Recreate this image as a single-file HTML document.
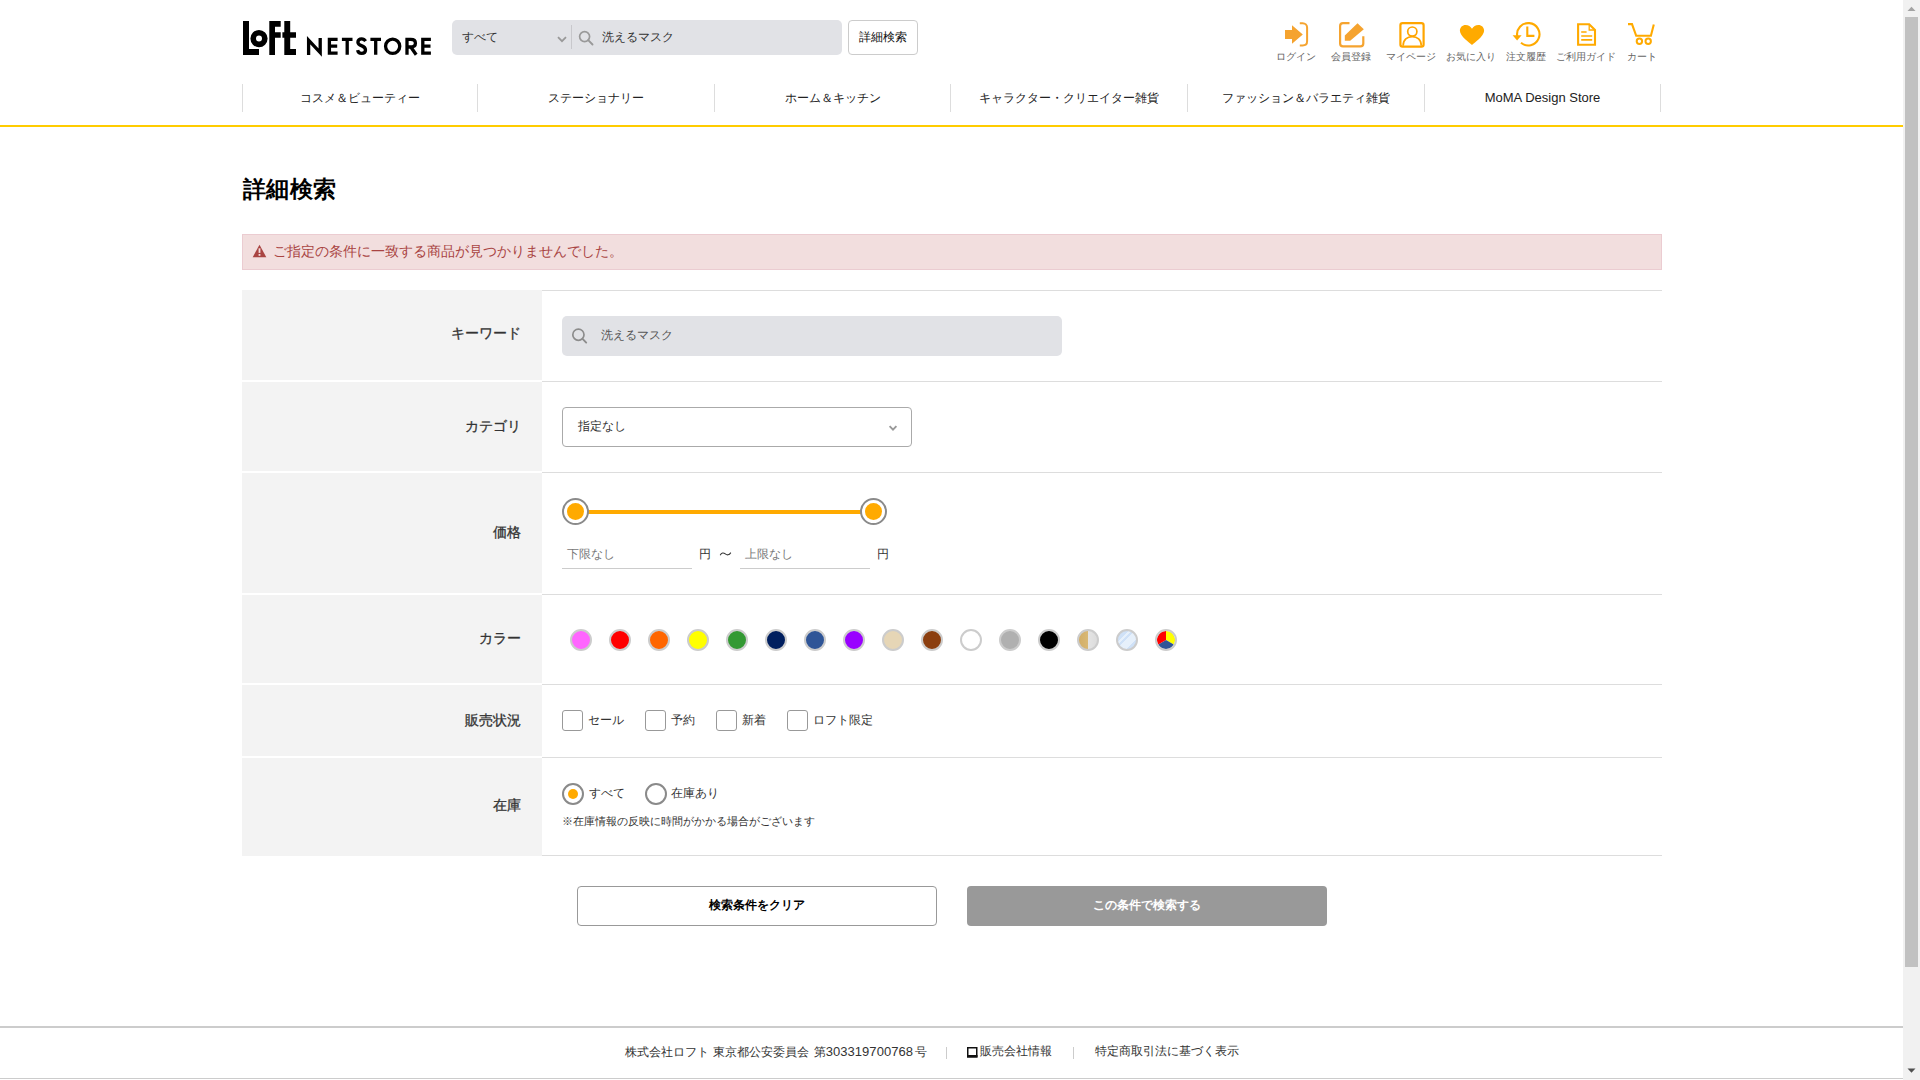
<!DOCTYPE html>
<html lang="ja"><head><meta charset="utf-8"><title>詳細検索 | ロフト公式通販サイト</title>
<style>
*{box-sizing:border-box;margin:0;padding:0}
html,body{width:1920px;height:1080px;overflow:hidden;background:#fff}
body{font-family:"Liberation Sans",sans-serif;color:#333;position:relative}
.a{position:absolute}
.t{position:absolute;white-space:nowrap;line-height:1}
svg{display:block}
.lbl{left:242px;width:279px;text-align:right;font-size:14px;font-weight:normal;-webkit-text-stroke:0.3px #333;color:#333}
.cb{position:absolute;top:710px;width:21px;height:21px;border:1px solid #999;border-radius:3px;background:#fff}
.cbl{top:714px;font-size:12px;color:#333}
.sw{position:absolute;top:629px;width:22px;height:22px;border-radius:50%;border:2px solid #ccc;overflow:hidden}

</style></head><body>

<!-- ===== HEADER ===== -->
<div class="a" id="logo" style="left:242px;top:20px;width:192px;height:37px">
<svg width="192" height="37" viewBox="242 20 192 37">
 <g fill="#000">
  <!-- L -->
  <path d="M243 21H249V49H259V55H243Z"/>
  <!-- o -->
  <path fill-rule="evenodd" d="M259 30a8.6 8.6 0 1 1 0 17.2a8.6 8.6 0 1 1 0-17.2zM259 35.6a3 3 0 1 0 0 6a3 3 0 1 0 0-6z"/>
  <!-- F -->
  <path d="M269.3 21H280.7V26.7H275V32.2H280.7V37.8H275V55H269.3Z"/>
  <!-- t -->
  <path d="M284.3 21H290.2V32.2H296V37.8H290.2V49H296V55H284.3V37.8H282.4V32.2H284.3Z"/>
 </g>
 <g fill="none" stroke="#000" stroke-width="3.3" stroke-linejoin="miter">
  <!-- N -->
  <path d="M308.6 55V40.2L320.2 52.6V38"/>
  <!-- E -->
  <path d="M337.6 39.4H329.4V53.2H337.6M329.4 46.2H337.2"/>
  <!-- T -->
  <path d="M341.9 39.4H352.5M347.2 39.4V54.8"/>
  <!-- S -->
  <path d="M365.6 41.2C364.6 39.6 363.2 38.9 361.6 38.9C359.4 38.9 357.9 40.3 357.9 42.2C357.9 44.2 359.6 45 361.9 45.9C364.5 46.9 365.5 48.2 365.5 50.1C365.5 52.3 363.7 53.4 361.6 53.4C359.5 53.4 358 52.1 357.6 50.2"/>
  <!-- T -->
  <path d="M370.4 39.4H381M375.7 39.4V54.8"/>
  <!-- O -->
  <circle cx="392.65" cy="46.3" r="7.1"/>
  <!-- R -->
  <path d="M407 54.8V39.4H410.8C413.9 39.4 415.4 40.9 415.4 43.2C415.4 45.6 413.8 47 410.8 47H407M410.8 47L416.2 54.8"/>
  <!-- E -->
  <path d="M430.9 39.4H422.8V53.2H430.9M422.8 46.2H430.5"/>
 </g>
</svg>
</div>

<!-- search bar -->
<div class="a" style="left:452px;top:20px;width:390px;height:35px;background:#e1e2e6;border-radius:5px"></div>
<div class="t" id="h_all" style="left:462px;top:31px;font-size:12px;color:#333">すべて</div>
<svg class="a" style="left:557px;top:36px" width="10" height="7" viewBox="0 0 10 7"><path d="M1 1.2L5 5.2L9 1.2" fill="none" stroke="#999" stroke-width="1.8"/></svg>
<div class="a" style="left:571px;top:25px;width:1px;height:24px;background:#c8c8cc"></div>
<svg class="a" style="left:578px;top:30px" width="16" height="16" viewBox="0 0 16 16"><circle cx="6.6" cy="6.6" r="5" fill="none" stroke="#999" stroke-width="1.7"/><path d="M10.2 10.2L14.5 14.5" stroke="#999" stroke-width="1.9" stroke-linecap="round"/></svg>
<div class="t" id="h_kw" style="left:602px;top:31px;font-size:12px;color:#333">洗えるマスク</div>
<div class="a" style="left:848px;top:20px;width:70px;height:35px;border:1px solid #ccc;border-radius:4px;background:#fff"></div>
<div class="t" id="h_adv" style="left:859px;top:31px;font-size:12px;color:#111">詳細検索</div>

<!-- header icons -->
<div id="icons">
 <!-- login -->
 <svg class="a" style="left:1283px;top:21px" width="28" height="28" viewBox="1283 21 28 28">
  <path d="M1285 30H1292V25.2L1302.8 34.5L1292 43.8V39H1285Z" fill="#f5a32f"/>
  <path d="M1299.8 23.2H1302.6C1305.2 23.2 1307.1 25 1307.1 27.6V41.2C1307.1 43.8 1305.2 45.4 1302.6 45.4H1299.8" fill="none" stroke="#f5a32f" stroke-width="2"/>
 </svg>
 <div class="t" style="left:1276px;top:52px;font-size:10px;color:#666">ログイン</div>
 <!-- register -->
 <svg class="a" style="left:1337px;top:20px" width="30" height="30" viewBox="1337 20 30 30">
  <path d="M1349.5 23.1H1343C1341.2 23.1 1340.1 24.2 1340.1 26V43.4C1340.1 45.2 1341.2 46.3 1343 46.3H1360.4C1362.2 46.3 1363.3 45.2 1363.3 43.4V36.3" fill="none" stroke="#f5a32f" stroke-width="2.2"/>
  <path d="M1357.5 23.3L1363.8 29.3L1350.2 40.8H1344.8V35.4Z" fill="#f5a32f"/>
 </svg>
 <div class="t" style="left:1331px;top:52px;font-size:10px;color:#666">会員登録</div>
 <!-- mypage -->
 <svg class="a" style="left:1397px;top:20px" width="30" height="30" viewBox="1397 20 30 30">
  <rect x="1400.4" y="23.1" width="23.2" height="23.6" rx="2.2" fill="none" stroke="#ffa500" stroke-width="2.2"/>
  <circle cx="1412.3" cy="31.6" r="4.6" fill="none" stroke="#ffa500" stroke-width="1.7"/>
  <path d="M1403.1 45.8C1403.1 39.8 1407.2 36.6 1412.2 36.6C1417.2 36.6 1421.3 39.8 1421.3 45.8" fill="none" stroke="#ffa500" stroke-width="1.7"/>
 </svg>
 <div class="t" style="left:1386px;top:52px;font-size:10px;color:#666">マイページ</div>
 <!-- fav -->
 <svg class="a" style="left:1457px;top:22px" width="30" height="26" viewBox="1457 22 30 26">
  <path d="M1472 45C1470 43 1459.9 36.3 1459.9 30.8C1459.9 27.3 1462.4 25 1465.6 25C1468.4 25 1470.7 26.6 1472 28.8C1473.3 26.6 1475.6 25 1478.4 25C1481.6 25 1484.1 27.3 1484.1 30.8C1484.1 36.3 1474 43 1472 45Z" fill="#ffaa00"/>
 </svg>
 <div class="t" style="left:1446px;top:52px;font-size:10px;color:#666">お気に入り</div>
 <!-- history -->
 <svg class="a" style="left:1510px;top:20px" width="34" height="30" viewBox="1510 20 34 30">
  <path d="M1517.3 36.5A11.2 11.2 0 1 1 1521 42.8" fill="none" stroke="#ffaa00" stroke-width="2.1"/>
  <path d="M1512.6 35.2H1521.6L1517.1 40.6Z" fill="#ffaa00"/>
  <path d="M1527.3 26.5V35.9H1534.4" fill="none" stroke="#ffaa00" stroke-width="2.1"/>
 </svg>
 <div class="t" style="left:1506px;top:52px;font-size:10px;color:#666">注文履歴</div>
 <!-- guide -->
 <svg class="a" style="left:1574px;top:21px" width="26" height="28" viewBox="1574 21 26 28">
  <path d="M1578.1 24.2H1589.2L1595 30V44.7H1578.1Z" fill="none" stroke="#ffaa00" stroke-width="2.1"/>
  <path d="M1589.2 24.2V30H1595" fill="none" stroke="#ffaa00" stroke-width="1.3"/>
  <path d="M1581.2 32H1586.6M1581.2 36H1592.2M1581.2 39.9H1592.2" stroke="#ffaa00" stroke-width="1.7"/>
 </svg>
 <div class="t" style="left:1556px;top:52px;font-size:10px;color:#666">ご利用ガイド</div>
 <!-- cart -->
 <svg class="a" style="left:1626px;top:21px" width="30" height="26" viewBox="1626 21 30 26">
  <path d="M1628 24.1H1632L1636.2 35.8H1650.9L1653.8 24.5" fill="none" stroke="#ffaa00" stroke-width="2.1"/>
  <circle cx="1639.4" cy="41.3" r="2.7" fill="none" stroke="#ffaa00" stroke-width="2"/>
  <circle cx="1648.2" cy="41.3" r="2.7" fill="none" stroke="#ffaa00" stroke-width="2"/>
 </svg>
 <div class="t" style="left:1627px;top:52px;font-size:10px;color:#666">カート</div>
</div>

<!-- nav -->
<div id="nav">
 <div class="a" style="left:242px;top:84px;width:1px;height:28px;background:#ddd"></div>
 <div class="a" style="left:477px;top:84px;width:1px;height:28px;background:#ddd"></div>
 <div class="a" style="left:714px;top:84px;width:1px;height:28px;background:#ddd"></div>
 <div class="a" style="left:950px;top:84px;width:1px;height:28px;background:#ddd"></div>
 <div class="a" style="left:1187px;top:84px;width:1px;height:28px;background:#ddd"></div>
 <div class="a" style="left:1424px;top:84px;width:1px;height:28px;background:#ddd"></div>
 <div class="a" style="left:1660px;top:84px;width:1px;height:28px;background:#ddd"></div>
 <div class="t" style="left:243px;width:234px;text-align:center;top:92px;font-size:12px;color:#222">コスメ＆ビューティー</div>
 <div class="t" style="left:478px;width:236px;text-align:center;top:92px;font-size:12px;color:#222">ステーショナリー</div>
 <div class="t" style="left:715px;width:235px;text-align:center;top:92px;font-size:12px;color:#222">ホーム＆キッチン</div>
 <div class="t" style="left:951px;width:236px;text-align:center;top:92px;font-size:12px;color:#222">キャラクター・クリエイター雑貨</div>
 <div class="t" style="left:1188px;width:236px;text-align:center;top:92px;font-size:12px;color:#222">ファッション＆バラエティ雑貨</div>
 <div class="t" style="left:1425px;width:235px;text-align:center;top:91px;font-size:13px;color:#222">MoMA Design Store</div>
</div>
<div class="a" style="left:0;top:125px;width:1903px;height:2px;background:#ffcc00"></div>

<!-- ===== MAIN ===== -->
<div class="t" id="title" style="left:242.5px;top:178px;font-size:23px;letter-spacing:0.6px;font-weight:bold;color:#000">詳細検索</div>

<div class="a" style="left:242px;top:234px;width:1420px;height:36px;background:#f2dede;border:1px solid #ebccd1"></div>
<svg class="a" style="left:252px;top:244px" width="15" height="14" viewBox="0 0 15 14"><path d="M7.5 0.8L14.3 13.2H0.7Z" fill="#a94442"/><rect x="6.6" y="4.3" width="1.8" height="4.6" fill="#f2dede"/><rect x="6.6" y="10" width="1.8" height="1.8" fill="#f2dede"/></svg>
<div class="t" id="alert" style="left:273px;top:244px;font-size:14px;color:#a94442">ご指定の条件に一致する商品が見つかりませんでした。</div>


<!-- table -->
<div id="tbl">
 <div class="a" style="left:242px;top:290px;width:300px;height:90px;background:#f3f3f3"></div>
 <div class="a" style="left:242px;top:382px;width:300px;height:89px;background:#f3f3f3"></div>
 <div class="a" style="left:242px;top:473px;width:300px;height:120px;background:#f3f3f3"></div>
 <div class="a" style="left:242px;top:595px;width:300px;height:88px;background:#f3f3f3"></div>
 <div class="a" style="left:242px;top:685px;width:300px;height:71px;background:#f3f3f3"></div>
 <div class="a" style="left:242px;top:758px;width:300px;height:98px;background:#f3f3f3"></div>
 <div class="a" style="left:542px;top:290px;width:1120px;height:1px;background:#ddd"></div>
 <div class="a" style="left:542px;top:381px;width:1120px;height:1px;background:#ddd"></div>
 <div class="a" style="left:542px;top:472px;width:1120px;height:1px;background:#ddd"></div>
 <div class="a" style="left:542px;top:594px;width:1120px;height:1px;background:#ddd"></div>
 <div class="a" style="left:542px;top:684px;width:1120px;height:1px;background:#ddd"></div>
 <div class="a" style="left:542px;top:757px;width:1120px;height:1px;background:#ddd"></div>
 <div class="a" style="left:542px;top:855px;width:1120px;height:1px;background:#ddd"></div>

 <div class="t lbl" style="top:326px">キーワード</div>
 <div class="t lbl" style="top:419px">カテゴリ</div>
 <div class="t lbl" style="top:525px">価格</div>
 <div class="t lbl" style="top:631px">カラー</div>
 <div class="t lbl" style="top:713px">販売状況</div>
 <div class="t lbl" style="top:798px">在庫</div>

 <!-- keyword -->
 <div class="a" style="left:562px;top:316px;width:500px;height:40px;background:#e1e2e6;border-radius:5px"></div>
 <svg class="a" style="left:570px;top:326px" width="20" height="20" viewBox="570 326 20 20"><circle cx="578.4" cy="334.7" r="5.6" fill="none" stroke="#8c8c8c" stroke-width="1.7"/><path d="M582.6 338.9L586.2 342.6" stroke="#8c8c8c" stroke-width="1.9" stroke-linecap="round"/></svg>
 <div class="t" id="kw" style="left:601px;top:329px;font-size:12px;color:#555">洗えるマスク</div>

 <!-- category -->
 <div class="a" style="left:562px;top:407px;width:350px;height:40px;border:1px solid #aaa;border-radius:4px;background:#fff"></div>
 <div class="t" id="cat" style="left:578px;top:420px;font-size:12px;color:#333">指定なし</div>
 <svg class="a" style="left:888px;top:424px" width="10" height="8" viewBox="888 424 10 8"><path d="M889.6 426.2L893 429.6L896.4 426.2" fill="none" stroke="#999" stroke-width="1.9"/></svg>

 <!-- price slider -->
 <div class="a" style="left:588px;top:510px;width:273px;height:4px;background:#ffaa00"></div>
 <div class="a" style="left:562px;top:498px;width:27px;height:27px;border:2px solid #8a8a8a;border-radius:50%;background:#fff"></div>
 <div class="a" style="left:567px;top:503px;width:17px;height:17px;border-radius:50%;background:#ffaa00"></div>
 <div class="a" style="left:860px;top:498px;width:27px;height:27px;border:2px solid #8a8a8a;border-radius:50%;background:#fff"></div>
 <div class="a" style="left:865px;top:503px;width:17px;height:17px;border-radius:50%;background:#ffaa00"></div>
 <div class="a" style="left:562px;top:568px;width:130px;height:1px;background:#ccc"></div>
 <div class="a" style="left:740px;top:568px;width:130px;height:1px;background:#ccc"></div>
 <div class="t" id="pmin" style="left:567px;top:548px;font-size:12px;color:#777">下限なし</div>
 <div class="t" style="left:699px;top:548px;font-size:12px;color:#333">円</div>
 <svg class="a" style="left:719px;top:550px" width="13" height="8" viewBox="0 0 13 8"><path d="M1.2 5.2C2.6 2.6 4.4 2.4 6.3 3.9C8.2 5.4 10 5.3 11.8 2.6" fill="none" stroke="#333" stroke-width="1.1"/></svg>
 <div class="t" style="left:745px;top:548px;font-size:12px;color:#777">上限なし</div>
 <div class="t" style="left:877px;top:548px;font-size:12px;color:#333">円</div>

 <!-- colors -->
 <div id="colors"><div class="sw" style="left:570px;background:#ff66ff"></div><div class="sw" style="left:609px;background:#ff0000"></div><div class="sw" style="left:648px;background:#ff6600"></div><div class="sw" style="left:687px;background:#ffff00"></div><div class="sw" style="left:726px;background:#339933"></div><div class="sw" style="left:765px;background:#001f5f"></div><div class="sw" style="left:804px;background:#2f5597"></div><div class="sw" style="left:843px;background:#9900ff"></div><div class="sw" style="left:882px;background:#e6d6b6"></div><div class="sw" style="left:921px;background:#8b3e0f"></div><div class="sw" style="left:960px;background:#ffffff"></div><div class="sw" style="left:999px;background:#b0b0b0"></div><div class="sw" style="left:1038px;background:#000000"></div><div class="sw" style="left:1077px;background:linear-gradient(90deg,#d2ae68 0,#d9b874 50%,#e4e4e4 50%,#dcdcdc 100%)"></div><div class="sw" style="left:1116px;background:linear-gradient(135deg,#cfe1f7 0,#cfe1f7 30%,#e6f0fb 30%,#e6f0fb 38%,#cfe1f7 38%,#cfe1f7 45%,#e6f0fb 45%,#e6f0fb 75%,#cfe1f7 75%)"></div><svg class="a" style="left:1155px;top:629px" width="22" height="22" viewBox="0 0 22 22"><path d="M11 11V2A9 9 0 0 1 18.8 15.5Z" fill="#ffff00"/><path d="M11 11L18.8 15.5A9 9 0 0 1 3.2 15.5Z" fill="#2f5597"/><path d="M11 11L3.2 15.5A9 9 0 0 1 11 2Z" fill="#ff0000"/><circle cx="11" cy="11" r="10" fill="none" stroke="#ccc" stroke-width="2"/></svg></div>

 <!-- sale status -->
 <div class="cb" style="left:562px"></div><div class="t cbl" style="left:588px">セール</div>
 <div class="cb" style="left:645px"></div><div class="t cbl" style="left:671px">予約</div>
 <div class="cb" style="left:716px"></div><div class="t cbl" style="left:742px">新着</div>
 <div class="cb" style="left:787px"></div><div class="t cbl" style="left:813px">ロフト限定</div>

 <!-- stock -->
 <div class="a" style="left:562px;top:783px;width:22px;height:22px;border:2px solid #8a8a8a;border-radius:50%"></div>
 <div class="a" style="left:568px;top:789px;width:10px;height:10px;border-radius:50%;background:#ffaa00"></div>
 <div class="t" style="left:589px;top:787px;font-size:12px;color:#333">すべて</div>
 <div class="a" style="left:645px;top:783px;width:22px;height:22px;border:2px solid #8a8a8a;border-radius:50%"></div>
 <div class="t" style="left:671px;top:787px;font-size:12px;color:#333">在庫あり</div>
 <div class="t" id="note" style="left:562px;top:816px;font-size:11px;color:#333">※在庫情報の反映に時間がかかる場合がございます</div>
</div>

<!-- buttons -->
<div class="a" style="left:577px;top:886px;width:360px;height:40px;border:1px solid #999;border-radius:4px;background:#fff"></div>
<div class="t" id="btn1" style="left:577px;width:360px;text-align:center;top:899px;font-size:12px;font-weight:bold;color:#000">検索条件をクリア</div>
<div class="a" style="left:967px;top:886px;width:360px;height:40px;border-radius:4px;background:#999"></div>
<div class="t" style="left:967px;width:360px;text-align:center;top:899px;font-size:12px;font-weight:bold;color:#fff">この条件で検索する</div>

<!-- footer -->
<div class="a" style="left:0;top:1026px;width:1903px;height:2px;background:#ccc"></div>
<div class="a" style="left:0;top:1078px;width:1903px;height:1px;background:#ccc"></div>
<div class="t" id="foot1" style="left:625px;top:1045px;font-size:12px;color:#333;word-spacing:1px">株式会社ロフト 東京都公安委員会 第<span style="font-size:13px;letter-spacing:0.05px;margin-right:1.5px">303319700768</span>号</div>
<div class="a" style="left:946px;top:1047px;width:1px;height:12px;background:#ccc"></div>
<svg class="a" style="left:967px;top:1047px" width="11" height="11" viewBox="0 0 11 11"><rect x="0.75" y="0.75" width="9" height="9" fill="none" stroke="#111" stroke-width="1.5"/><rect x="0" y="8" width="10.5" height="2.5" fill="#111"/></svg>
<div class="t" style="left:980px;top:1045px;font-size:12px;color:#333">販売会社情報</div>
<div class="a" style="left:1073px;top:1047px;width:1px;height:12px;background:#ccc"></div>
<div class="t" style="left:1095px;top:1045px;font-size:12px;color:#333">特定商取引法に基づく表示</div>

<!-- scrollbar -->
<div class="a" style="left:1903px;top:0;width:17px;height:1080px;background:#f1f1f1"></div>
<div class="a" style="left:1905px;top:17px;width:13px;height:950px;background:#c1c1c1"></div>
<svg class="a" style="left:1903px;top:0" width="17" height="17" viewBox="0 0 17 17"><path d="M4.5 11H12.5L8.5 6.8Z" fill="#a3a3a3"/></svg>
<svg class="a" style="left:1903px;top:1063px" width="17" height="17" viewBox="0 0 17 17"><path d="M4.5 5.5H12.5L8.5 9.8Z" fill="#505050"/></svg>

</body></html>
